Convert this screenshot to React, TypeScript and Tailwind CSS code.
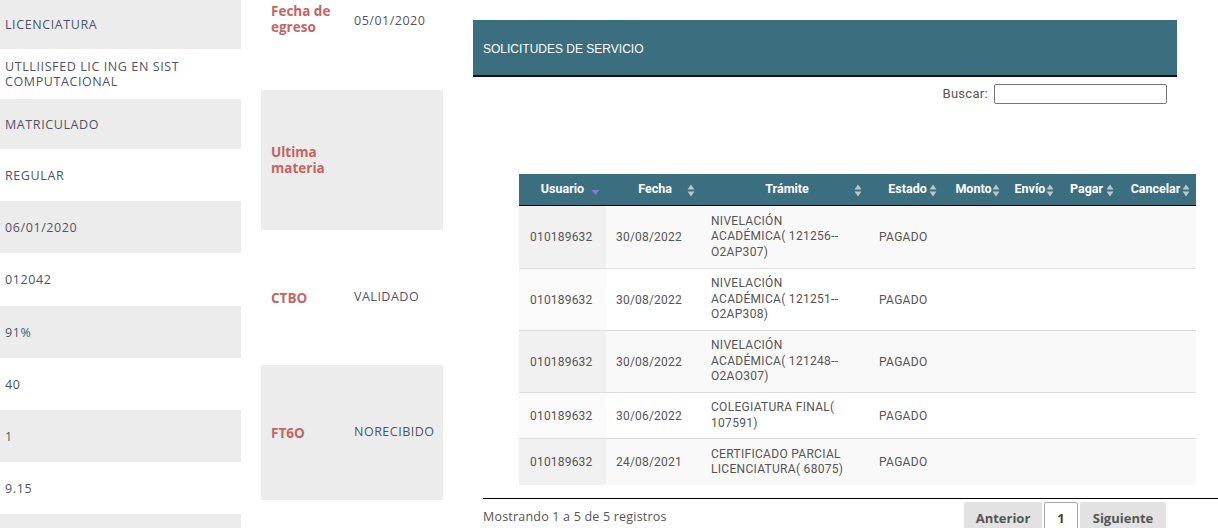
import React from "react";

const leftRows: { text: string[]; h: number; gray: boolean }[] = [
  { text: ["LICENCIATURA"], h: 49, gray: true },
  { text: ["UTLLIISFED LIC ING EN SIST", "COMPUTACIONAL"], h: 50, gray: false },
  { text: ["MATRICULADO"], h: 50, gray: true },
  { text: ["REGULAR"], h: 52, gray: false },
  { text: ["06/01/2020"], h: 52, gray: true },
  { text: ["012042"], h: 53, gray: false },
  { text: ["91%"], h: 52, gray: true },
  { text: ["40"], h: 52, gray: false },
  { text: ["1"], h: 52, gray: true },
  { text: ["9.15"], h: 52, gray: false },
  { text: [""], h: 40, gray: true },
];

const midRows: { label: string[]; value: string; h: number; gray: boolean; top?: boolean }[] = [
  { label: ["Fecha de", "egreso"], value: "05/01/2020", h: 90, gray: false, top: true },
  { label: ["Ultima", "materia"], value: "", h: 140, gray: true },
  { label: ["CTBO"], value: "VALIDADO", h: 135, gray: false },
  { label: ["FT6O"], value: "NORECIBIDO", h: 135, gray: true },
  { label: [""], value: "", h: 28, gray: false },
];

const cols = [
  { name: "Usuario", w: 87, arrowRight: 6, sorted: true },
  { name: "Fecha", w: 98, arrowRight: 9 },
  { name: "Trámite", w: 166, arrowRight: 8 },
  { name: "Estado", w: 75, arrowRight: 8 },
  { name: "Monto", w: 57, arrowRight: 2 },
  { name: "Envío", w: 56, arrowRight: 4 },
  { name: "Pagar", w: 57, arrowRight: 1 },
  { name: "Cancelar", w: 81, arrowRight: 6 },
];

const rows = [
  { date: "30/08/2022", tr: ["NIVELACIÓN", "ACADÉMICA( 121256--", "O2AP307)"], h: 62 },
  { date: "30/08/2022", tr: ["NIVELACIÓN", "ACADÉMICA( 121251--", "O2AP308)"], h: 62 },
  { date: "30/08/2022", tr: ["NIVELACIÓN", "ACADÉMICA( 121248--", "O2AO307)"], h: 62 },
  { date: "30/06/2022", tr: ["COLEGIATURA FINAL(", "107591)"], h: 46 },
  { date: "24/08/2021", tr: ["CERTIFICADO PARCIAL", "LICENCIATURA( 68075)"], h: 47 },
];

function SortArrows({ sorted }: { sorted?: boolean }) {
  if (sorted) {
    return (
      <svg width="9" height="12" viewBox="0 0 9 12">
        <polygon points="0.5,6 8.5,6 4.5,11" fill="#7b7fd6" />
      </svg>
    );
  }
  return (
    <svg width="8" height="13" viewBox="0 0 8 13">
      <polygon points="0.5,5.5 7.5,5.5 4,0.5" fill="#b9c6cb" />
      <polygon points="0.5,7.5 7.5,7.5 4,12.5" fill="#b9c6cb" />
    </svg>
  );
}

export default function App() {
  const leftFont = { fontFamily: '"Open Sans", "Noto Sans", sans-serif' };
  return (
    <div className="relative flex h-[528px] w-[1218px] overflow-hidden bg-white">
      {/* Left column */}
      <div className="flex w-[241px] shrink-0 flex-col" style={leftFont}>
        {leftRows.map((r, i) => (
          <div
            key={i}
            className={`flex shrink-0 flex-col justify-center pl-[5px] text-[12.5px] leading-[15px] tracking-[0.6px] text-[#4e5565] ${r.gray ? "bg-[#ececec]" : "bg-white"}`}
            style={{ height: r.h }}
          >
            {r.text.map((t, j) => (
              <span key={j}>{t}</span>
            ))}
          </div>
        ))}
      </div>

      {/* Middle column */}
      <div className="ml-[20px] flex w-[182px] shrink-0 flex-col" style={leftFont}>
        {midRows.map((r, i) => (
          <div
            key={i}
            className={`flex shrink-0 ${r.top ? "items-start pt-[3px]" : "items-center"} ${r.gray ? "bg-[#ececec]" : "bg-white"}`}
            style={{ height: r.h }}
          >
            <div className="w-[93px] shrink-0 pl-[10px] text-[13.5px] font-bold leading-[16px] text-[#c46464]">
              {r.label.map((t, j) => (
                <div key={j}>{t}</div>
              ))}
            </div>
            <div className={`text-[12.5px] tracking-[0.5px] text-[#4e5565] ${r.top ? "pt-[9px]" : ""}`}>{r.value}</div>
          </div>
        ))}
      </div>

      {/* Right section */}
      <div className="ml-[30px] flex flex-1 flex-col pt-[20px]" style={{ fontFamily: 'Roboto, "Liberation Sans", sans-serif' }}>
        <div className="flex h-[57px] w-[704px] shrink-0 items-center border-b-2 border-[#111] bg-[#3b6e7f] pl-[10px] pt-[2px] text-[12px] text-white" style={{ fontFamily: '"Liberation Sans", Arial, sans-serif' }}>
          SOLICITUDES DE SERVICIO
        </div>
        <div className="mt-[7px] flex w-[694px] shrink-0 items-center justify-end gap-[6px] text-[13px] tracking-[0.3px] text-[#555]">
          <span>Buscar:</span>
          <div className="h-[20px] w-[173px] rounded-[2px] border border-[#777] bg-white" />
        </div>

        <div className="ml-[46px] mt-[70px] w-[677px] shrink-0 text-[12px] text-[#555]">
          <div className="flex h-[32px] border-b border-black bg-[#3b6e7f] text-[12.5px] font-bold text-white">
            {cols.map((c) => (
              <div key={c.name} className="relative flex items-center justify-center" style={{ width: c.w }}>
                <span className="relative z-0">{c.name}</span>
                <span className="absolute top-[10px]" style={{ right: c.arrowRight }}>
                  <SortArrows sorted={c.sorted} />
                </span>
              </div>
            ))}
          </div>
          {rows.map((r, i) => {
            const odd = i % 2 === 0;
            return (
              <div
                key={i}
                className={`flex ${i > 0 ? "border-t border-[#dddddd]" : ""} ${odd ? "bg-[#f9f9f9]" : "bg-white"}`}
                style={{ height: r.h }}
              >
                <div className={`flex w-[87px] items-center pl-[11px] tracking-[0.2px] ${odd ? "bg-[#f1f1f1]" : "bg-[#fafafa]"}`}>010189632</div>
                <div className="flex w-[98px] items-center pl-[10px] tracking-[0.2px]">{r.date}</div>
                <div className="flex w-[166px] flex-col justify-center pl-[7px] leading-[15.5px] tracking-[0.3px]">
                  {r.tr.map((t, j) => (
                    <span key={j}>{t}</span>
                  ))}
                </div>
                <div className="flex w-[75px] items-center pl-[9px] tracking-[0.3px]">PAGADO</div>
              </div>
            );
          })}
        </div>

        <div className="ml-[10px] mt-[13px] flex shrink-0 items-start justify-between border-t border-black pt-[3px]">
          <span className="mt-[6px] text-[12.5px] tracking-[0.2px] text-[#555]" style={leftFont}>
            Mostrando 1 a 5 de 5 registros
          </span>
          <div className="mr-[52px] flex gap-[2px] text-[13px] font-bold text-[#555]" style={leftFont}>
            <div className="flex h-[30px] w-[78px] items-center justify-center rounded-t-[2px] bg-[#e2e2e2] pt-[3px]">Anterior</div>
            <div className="flex h-[30px] w-[34px] items-center justify-center rounded-t-[2px] border border-[#aaa] bg-white pt-[3px] text-[#444]">1</div>
            <div className="flex h-[30px] w-[86px] items-center justify-center rounded-t-[2px] bg-[#e2e2e2] pt-[3px]">Siguiente</div>
          </div>
        </div>
      </div>
    </div>
  );
}
